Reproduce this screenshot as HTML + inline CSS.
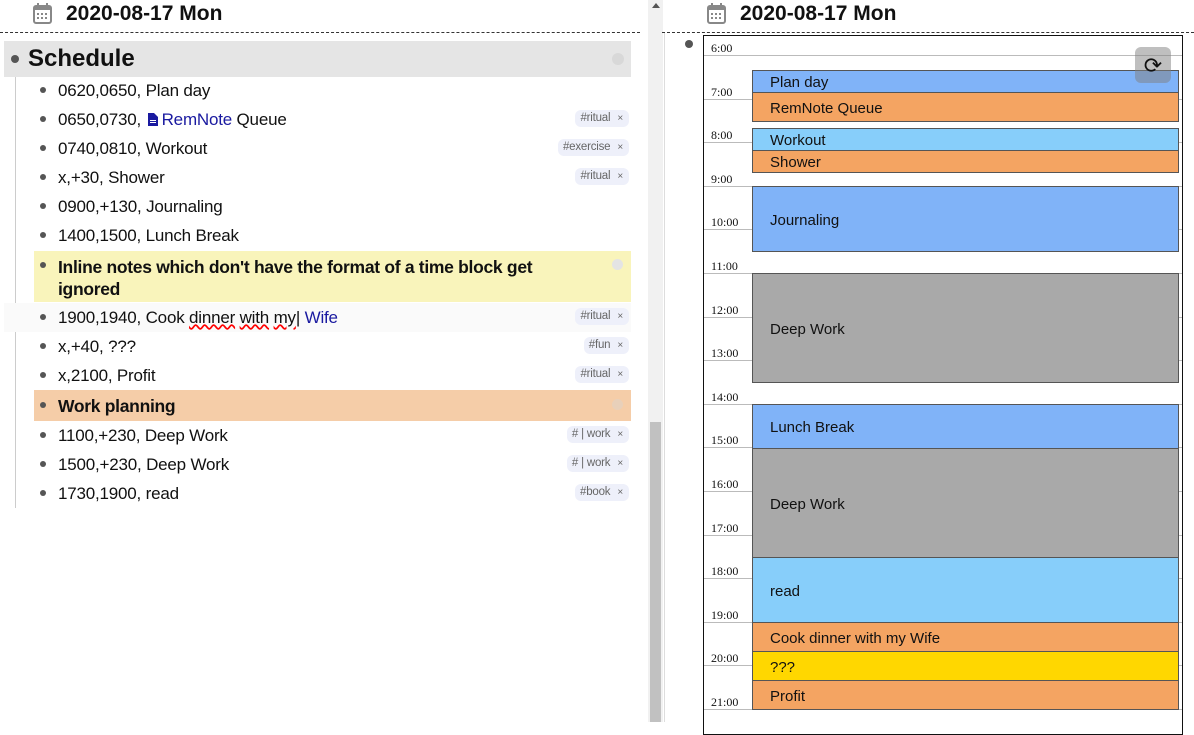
<!DOCTYPE html>
<html><head><meta charset="utf-8"><style>
*{margin:0;padding:0;box-sizing:border-box}
body{width:1194px;height:722px;overflow:hidden;background:#fff;font-family:"Liberation Sans",sans-serif;position:relative;color:#111}
.abs{position:absolute}
.hdr{font-weight:bold;font-size:21px;white-space:nowrap}
.dash{border-top:1px dashed #333;height:0}
.row{position:absolute;left:34px;width:597px;height:29px;font-size:17px;white-space:nowrap;line-height:31px;letter-spacing:-0.2px}
.row .b{position:absolute;left:6px;top:12px;width:6px;height:6px;border-radius:50%;background:#555}
.row .t{position:absolute;left:24px}
.tag{position:absolute;right:2px;top:6px;height:17px;line-height:17px;font-size:11.5px;color:#666;background:#eef0fa;border-radius:6px;padding:0 6px 0 5px}
.tag i{font-style:normal;margin-left:7px;font-size:10px}
.ev{position:absolute;left:752px;width:427px;border:1px solid #555;font-size:15px;padding-left:17px;padding-top:2px;display:flex;align-items:center}
.hl{position:absolute;left:704px;width:478px;border-top:1px solid #bbb}
.hlab{position:absolute;left:711px;font-family:"Liberation Serif",serif;font-size:12px}
</style></head><body>
<svg class="abs" style="left:33px;top:3px" width="19" height="21" viewBox="0 0 19 21"><rect x="1" y="3" width="17" height="17" rx="2" fill="none" stroke="#888" stroke-width="2"/><rect x="1" y="3" width="17" height="4" fill="#888"/><rect x="4" y="0" width="2" height="5" fill="#888"/><rect x="13" y="0" width="2" height="5" fill="#888"/><g fill="#888"><rect x="4" y="10" width="2" height="2"/><rect x="8" y="10" width="2" height="2"/><rect x="12" y="10" width="2" height="2"/><rect x="4" y="14" width="2" height="2"/><rect x="8" y="14" width="2" height="2"/><rect x="12" y="14" width="2" height="2"/></g></svg>
<div class="abs hdr" style="left:66px;top:2px">2020-08-17 Mon</div>
<div class="abs dash" style="left:0;top:32px;width:640px"></div>
<div class="abs" style="left:4px;top:41px;width:627px;height:36px;background:#e5e5e5"></div>
<div class="abs" style="left:11px;top:55px;width:8px;height:8px;border-radius:50%;background:#555"></div>
<div class="abs" style="left:28px;top:45px;font-size:24px;font-weight:bold">Schedule</div>
<div class="abs" style="left:612px;top:53px;width:12px;height:12px;border-radius:50%;background:#d8d8d8"></div>
<div class="abs" style="left:15px;top:77px;width:1px;height:431px;background:#ccc"></div>

<div class="row" style="top:75px"><span class="b"></span><span class="t">0620,0650, Plan day</span></div>
<div class="row" style="top:104px"><span class="b"></span><span class="t">0650,0730, <svg width="10" height="13" viewBox="0 0 10 13" style="vertical-align:-1px;margin:0 4px 0 2px"><path d="M0 0h6l4 4v9H0z" fill="#1a1aa0"/><rect x="2" y="7" width="6" height="1" fill="#fff"/><rect x="2" y="9" width="6" height="1" fill="#fff"/></svg><span style="color:#1a1aa0">RemNote</span> Queue</span><span class="tag">#ritual<i>×</i></span></div>
<div class="row" style="top:133px"><span class="b"></span><span class="t">0740,0810, Workout</span><span class="tag">#exercise<i>×</i></span></div>
<div class="row" style="top:162px"><span class="b"></span><span class="t">x,+30, Shower</span><span class="tag">#ritual<i>×</i></span></div>
<div class="row" style="top:191px"><span class="b"></span><span class="t">0900,+130, Journaling</span></div>
<div class="row" style="top:220px"><span class="b"></span><span class="t">1400,1500, Lunch Break</span></div>
<div class="abs" style="left:34px;top:251px;width:597px;height:51px;background:#f9f4bb"></div>
<div class="abs" style="left:40px;top:262px;width:6px;height:6px;border-radius:50%;background:#555"></div>
<div class="abs" style="left:58px;top:256px;font-size:17.5px;font-weight:bold;line-height:22px;letter-spacing:-0.3px">Inline notes which don't have the format of a time block get<br>ignored</div>
<div class="abs" style="left:612px;top:259px;width:11px;height:11px;border-radius:50%;background:#e4e4e4"></div>
<div class="abs" style="left:4px;top:303px;width:627px;height:29px;background:#fafafa"></div>
<div class="row" style="top:302px"><span class="b"></span><span class="t">1900,1940, Cook <span style="text-decoration:underline wavy red">dinner</span> <span style="text-decoration:underline wavy red">with</span> <span style="text-decoration:underline wavy red">my</span>| <span style="color:#1a1aa0">Wife</span></span><span class="tag">#ritual<i>×</i></span></div>
<div class="row" style="top:331px"><span class="b"></span><span class="t">x,+40, ???</span><span class="tag">#fun<i>×</i></span></div>
<div class="row" style="top:360px"><span class="b"></span><span class="t">x,2100, Profit</span><span class="tag">#ritual<i>×</i></span></div>
<div class="abs" style="left:34px;top:390px;width:597px;height:31px;background:#f5cda8"></div>
<div class="abs" style="left:40px;top:402px;width:6px;height:6px;border-radius:50%;background:#555"></div>
<div class="abs" style="left:58px;top:396px;font-size:17.5px;font-weight:bold;letter-spacing:-0.3px">Work planning</div>
<div class="abs" style="left:612px;top:399px;width:11px;height:11px;border-radius:50%;background:#e8d0ba"></div>
<div class="row" style="top:420px"><span class="b"></span><span class="t">1100,+230, Deep Work</span><span class="tag"># | work<i>×</i></span></div>
<div class="row" style="top:449px"><span class="b"></span><span class="t">1500,+230, Deep Work</span><span class="tag"># | work<i>×</i></span></div>
<div class="row" style="top:478px"><span class="b"></span><span class="t">1730,1900, read</span><span class="tag">#book<i>×</i></span></div>

<div class="abs" style="left:648px;top:0;width:15px;height:722px;background:#f1f1f1"></div>
<div class="abs" style="left:650px;top:422px;width:11px;height:300px;background:#c1c1c1"></div>
<div class="abs" style="left:652px;top:3px;width:0;height:0;border-left:4px solid transparent;border-right:4px solid transparent;border-bottom:5px solid #555"></div>
<div class="abs" style="left:664px;top:33px;width:1px;height:689px;background:#ddd"></div>

<svg class="abs" style="left:707px;top:3px" width="19" height="21" viewBox="0 0 19 21"><rect x="1" y="3" width="17" height="17" rx="2" fill="none" stroke="#888" stroke-width="2"/><rect x="1" y="3" width="17" height="4" fill="#888"/><rect x="4" y="0" width="2" height="5" fill="#888"/><rect x="13" y="0" width="2" height="5" fill="#888"/><g fill="#888"><rect x="4" y="10" width="2" height="2"/><rect x="8" y="10" width="2" height="2"/><rect x="12" y="10" width="2" height="2"/><rect x="4" y="14" width="2" height="2"/><rect x="8" y="14" width="2" height="2"/><rect x="12" y="14" width="2" height="2"/></g></svg>
<div class="abs hdr" style="left:740px;top:2px">2020-08-17 Mon</div>
<div class="abs dash" style="left:662px;top:32px;width:532px"></div>
<div class="abs" style="left:685px;top:40px;width:8px;height:8px;border-radius:50%;background:#555"></div>
<div class="abs" style="left:703px;top:35px;width:480px;height:700px;border:1px solid #111"></div>

<div class="hl" style="top:55px"></div><div class="hlab" style="top:41px">6:00</div>
<div class="hl" style="top:99px"></div><div class="hlab" style="top:85px">7:00</div>
<div class="hl" style="top:142px"></div><div class="hlab" style="top:128px">8:00</div>
<div class="hl" style="top:186px"></div><div class="hlab" style="top:172px">9:00</div>
<div class="hl" style="top:229px"></div><div class="hlab" style="top:215px">10:00</div>
<div class="hl" style="top:273px"></div><div class="hlab" style="top:259px">11:00</div>
<div class="hl" style="top:317px"></div><div class="hlab" style="top:303px">12:00</div>
<div class="hl" style="top:360px"></div><div class="hlab" style="top:346px">13:00</div>
<div class="hl" style="top:404px"></div><div class="hlab" style="top:390px">14:00</div>
<div class="hl" style="top:447px"></div><div class="hlab" style="top:433px">15:00</div>
<div class="hl" style="top:491px"></div><div class="hlab" style="top:477px">16:00</div>
<div class="hl" style="top:535px"></div><div class="hlab" style="top:521px">17:00</div>
<div class="hl" style="top:578px"></div><div class="hlab" style="top:564px">18:00</div>
<div class="hl" style="top:622px"></div><div class="hlab" style="top:608px">19:00</div>
<div class="hl" style="top:665px"></div><div class="hlab" style="top:651px">20:00</div>
<div class="hl" style="top:709px"></div><div class="hlab" style="top:695px">21:00</div>

<div class="ev" style="top:70px;height:23px;background:#80b3f8">Plan day</div>
<div class="ev" style="top:92px;height:30px;background:#f4a462">RemNote Queue</div>
<div class="ev" style="top:128px;height:23px;background:#87cefa">Workout</div>
<div class="ev" style="top:150px;height:23px;background:#f4a462">Shower</div>
<div class="ev" style="top:186px;height:66px;background:#80b3f8">Journaling</div>
<div class="ev" style="top:273px;height:110px;background:#a9a9a9">Deep Work</div>
<div class="ev" style="top:404px;height:45px;background:#80b3f8">Lunch Break</div>
<div class="ev" style="top:448px;height:110px;background:#a9a9a9">Deep Work</div>
<div class="ev" style="top:557px;height:66px;background:#87cefa">read</div>
<div class="ev" style="top:622px;height:30px;background:#f4a462">Cook dinner with my Wife</div>
<div class="ev" style="top:651px;height:30px;background:#ffd700">???</div>
<div class="ev" style="top:680px;height:30px;background:#f4a462">Profit</div>

<div class="abs" style="left:1135px;top:47px;width:36px;height:36px;border-radius:6px;background:rgba(128,128,128,0.5);font-size:22px;text-align:center;line-height:38px;color:#111">⟳</div>
</body></html>
